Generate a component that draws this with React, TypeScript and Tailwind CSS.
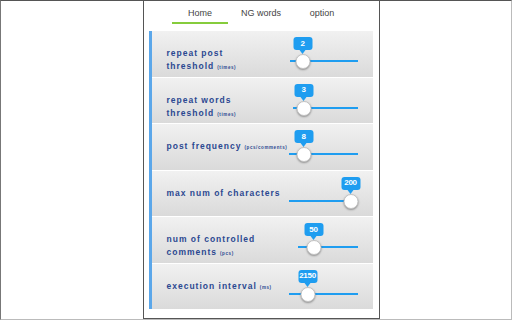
type Row = {
  lines: string[]
  unit?: string
  value: string
  trackLeft: number
  thumb: number
}

const rows: Row[] = [
  { lines: ['repeat post', 'threshold'], unit: '(times)', value: '2', trackLeft: 289, thumb: 302 },
  { lines: ['repeat words', 'threshold'], unit: '(times)', value: '3', trackLeft: 292, thumb: 303 },
  { lines: ['post frequency'], unit: '(pcs/comments)', value: '8', trackLeft: 288, thumb: 303 },
  { lines: ['max num of characters'], value: '200', trackLeft: 288, thumb: 350 },
  { lines: ['num of controlled', 'comments'], unit: '(pcs)', value: '50', trackLeft: 297, thumb: 313 },
  { lines: ['execution interval'], unit: '(ms)', value: '2150', trackLeft: 288, thumb: 307 },
]

const TRACK_RIGHT = 357

function Slider({ row }: { row: Row }) {
  const width = TRACK_RIGHT - row.trackLeft
  const center = row.thumb - row.trackLeft
  return (
    <div className="relative z-10 h-full shrink-0" style={{ width }}>
      <div className="absolute left-0 right-0 top-[29px] h-[2px] bg-[#1f9df0]" />
      <div
        className="absolute top-[6px] flex -translate-x-1/2 flex-col items-center"
        style={{ left: center }}
      >
        <div className="flex h-[13px] min-w-[19px] items-center justify-center rounded-[3px] bg-[#1f9df0] px-[1px] text-[8px] font-bold leading-none tracking-[-0.3px] text-white">
          {row.value}
        </div>
        <div className="h-0 w-0 border-x-[3px] border-t-[4px] border-x-transparent border-t-[#1f9df0]" />
      </div>
      <div
        className="absolute top-[23px] size-[15px] -translate-x-1/2 rounded-full border border-[#c4c4c4] bg-white shadow-[0_1px_2px_rgba(0,0,0,0.35)]"
        style={{ left: center }}
      />
    </div>
  )
}

function Card({ row }: { row: Row }) {
  return (
    <div className="flex h-[45.5px] bg-gradient-to-b from-[#f1f1f1] to-[#dadada] pr-[15px]">
      <div className="min-w-0 flex-1 whitespace-nowrap pl-[15px] pt-[16px] text-[8.5px] font-bold leading-[13px] tracking-[1px] text-[#2b4891]">
        {row.lines.map((l, i) => (
          <div key={i}>
            {l}
            {i === row.lines.length - 1 && row.unit && (
              <span className="ml-[3px] text-[4.5px] font-bold tracking-[0.6px]">{row.unit}</span>
            )}
          </div>
        ))}
      </div>
      <Slider row={row} />
    </div>
  )
}

export default function App() {
  return (
    <div
      className="flex h-[320px] w-[512px] justify-center overflow-hidden border-l border-t border-r border-b border-l-[#777] border-t-[#555] border-r-[#bbb] border-b-[#bbb] bg-white"
      style={{ fontFamily: '"Liberation Sans", Arial, sans-serif' }}
    >
      <div className="ml-[10px] flex h-[318px] w-[237px] flex-col border-x border-b border-[#555] bg-white">
        <div className="flex h-[29px] justify-center pt-[6px]">
          {['Home', 'NG words', 'option'].map((t, i) => (
            <div key={t} className="flex w-[61px] flex-col items-center">
              <span className="text-[9px] leading-[12px] text-[#444]">{t}</span>
              {i === 0 && <span className="mt-[3px] h-[2px] w-[56px] bg-[#86cc3c]" />}
            </div>
          ))}
        </div>
        <div className="ml-[5px] mr-[6px] mt-[1px] flex flex-col gap-px border-l-[3px] border-[#5ba7ea] bg-white">
          {rows.map((r, i) => (
            <Card key={i} row={r} />
          ))}
        </div>
      </div>
    </div>
  )
}
